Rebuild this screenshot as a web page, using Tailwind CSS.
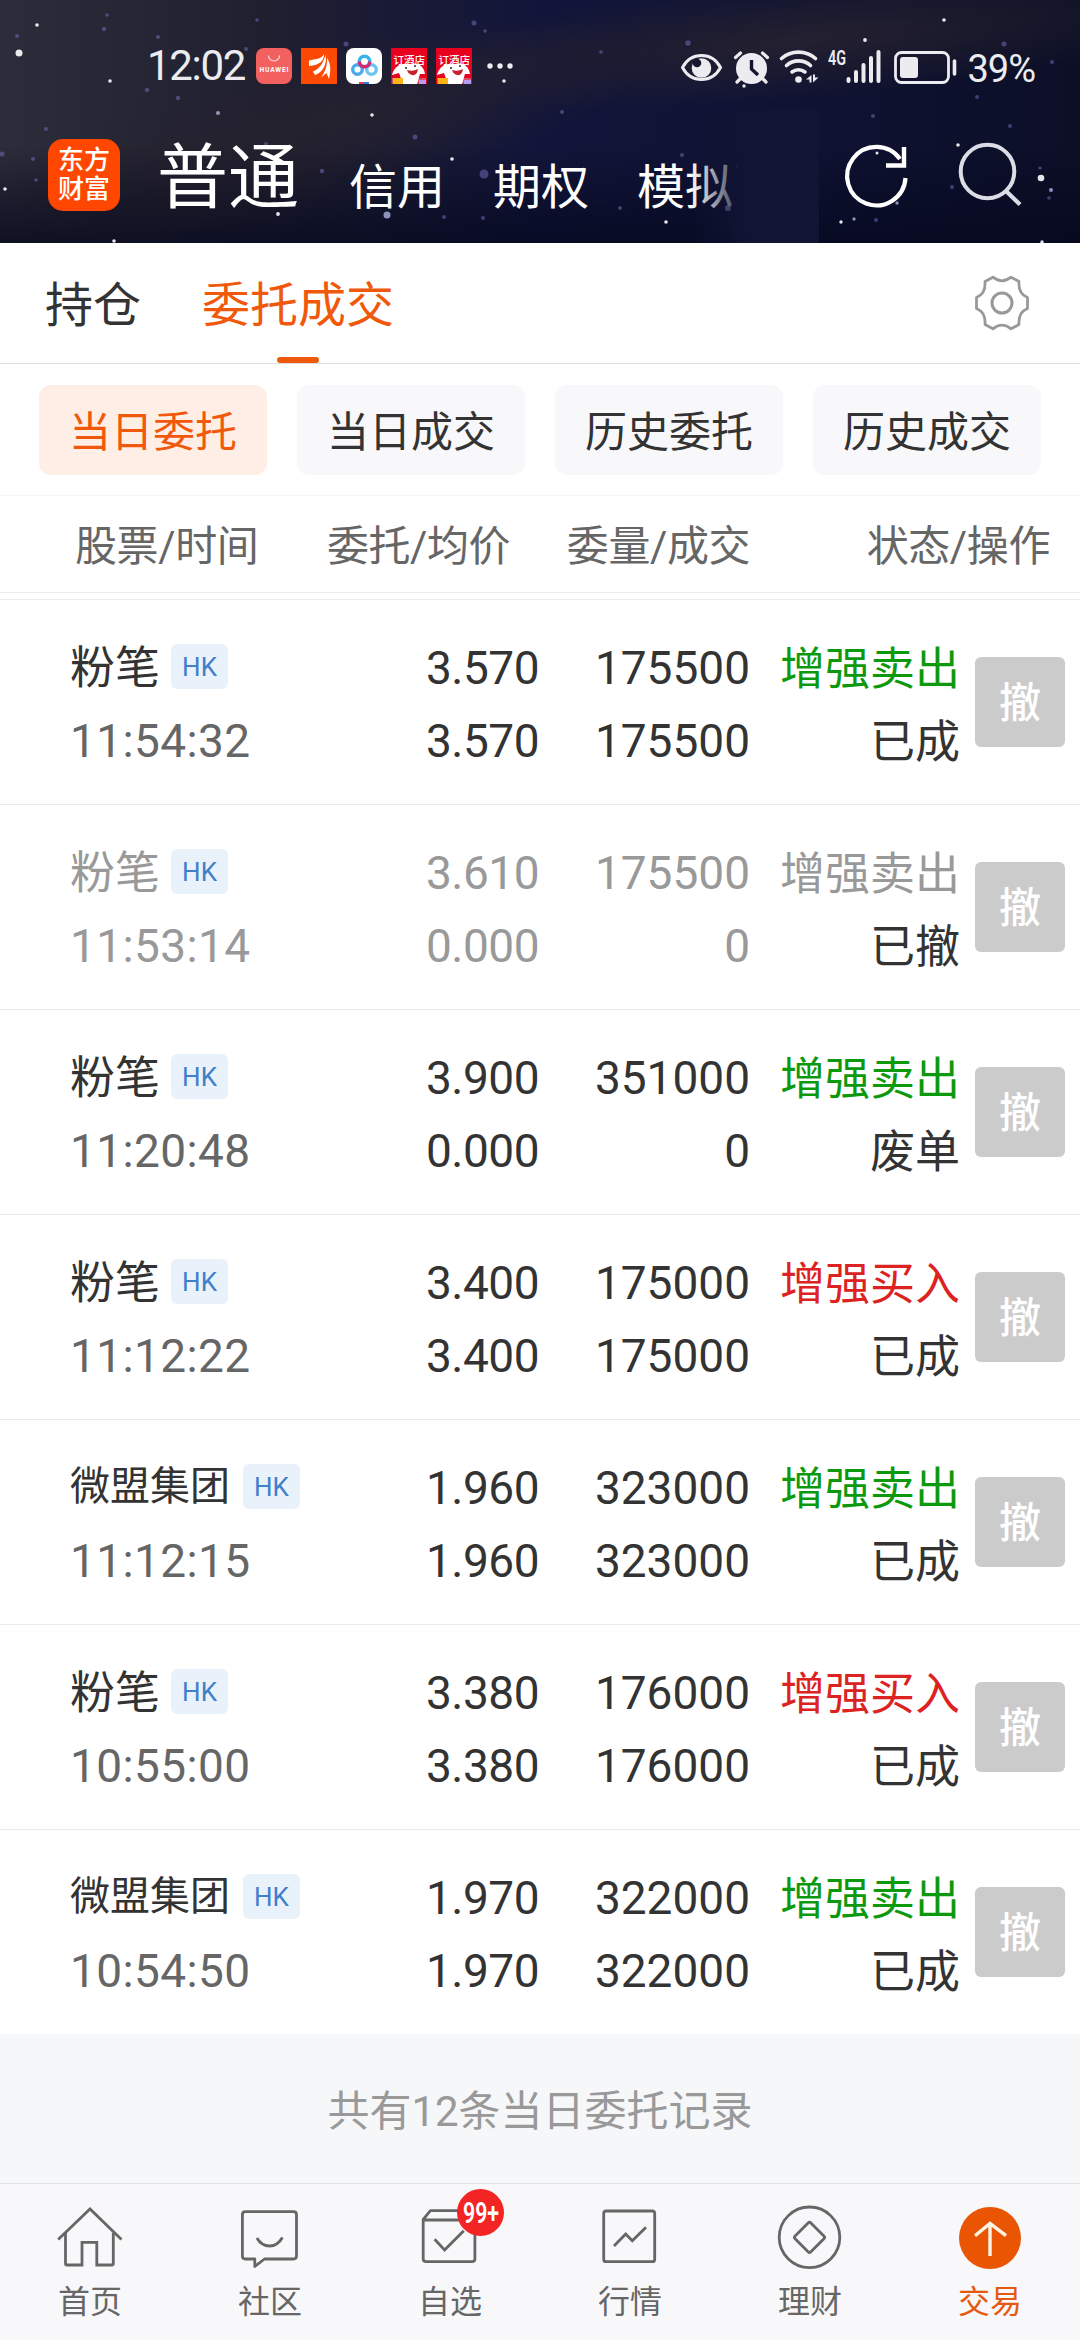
<!DOCTYPE html>
<html lang="zh-CN">

<head>
    <meta charset="UTF-8">
    <meta name="viewport" content="width=device-width, initial-scale=1.0">
    <title>委托成交</title>
    <script src="https://cdn.jsdelivr.net/npm/@tailwindcss/browser@4"></script>
</head>

<body class="w-[1080px] h-[2340px] overflow-hidden flex flex-col bg-white text-[#333] font-['Roboto','Noto_Sans_CJK_SC',sans-serif] whitespace-nowrap">

    <!-- Header -->
    <header class="relative h-[243px] shrink-0 overflow-hidden text-white bg-[#0d1030]">
        <!-- Night sky -->
        <svg class="absolute inset-0" width="1080" height="243" viewBox="0 0 1080 243">
            <defs>
                <linearGradient id="sky" x1="0" y1="0" x2="1" y2="0">
                    <stop offset="0" stop-color="#2c2d3a" />
                    <stop offset=".25" stop-color="#1f1f30" />
                    <stop offset=".5" stop-color="#12153a" />
                    <stop offset=".75" stop-color="#0f1232" />
                    <stop offset="1" stop-color="#0c0f26" />
                </linearGradient>
                <linearGradient id="dusk" x1="0" y1="0" x2="0" y2="1">
                    <stop offset=".6" stop-color="#04071c" stop-opacity="0" />
                    <stop offset="1" stop-color="#04071c" stop-opacity=".7" />
                </linearGradient>
                <radialGradient id="haze">
                    <stop offset="0" stop-color="#26222e" stop-opacity=".9" />
                    <stop offset="1" stop-color="#26222e" stop-opacity="0" />
                </radialGradient>
            </defs>
            <rect width="1080" height="243" fill="url(#sky)" />
            <ellipse cx="330" cy="120" rx="330" ry="75" fill="url(#haze)" transform="rotate(-12 330 120)" />
            <ellipse cx="160" cy="200" rx="260" ry="60" fill="url(#haze)" transform="rotate(-8 160 200)" />
            <ellipse cx="800" cy="40" rx="420" ry="60" fill="url(#haze)" transform="rotate(-5 800 40)" />
            <rect width="1080" height="243" fill="url(#dusk)" />
            <g fill="#fff" opacity=".9">
                <circle cx="19" cy="53" r="3.500" /><circle cx="37" cy="25" r="1.800" /><circle cx="110" cy="81" r="1.800" />
                <circle cx="5" cy="189" r="1.800" /><circle cx="372" cy="115" r="1.800" /><circle cx="452" cy="159" r="1.800" />
                <circle cx="278" cy="214" r="1.900" /><circle cx="114" cy="241" r="1.800" /><circle cx="504" cy="81" r="1.800" />
                <circle cx="865" cy="40" r="1.900" /><circle cx="744" cy="86" r="1.700" /><circle cx="666" cy="222" r="1.800" />
                <circle cx="841" cy="222" r="1.700" /><circle cx="958" cy="145" r="1.800" /><circle cx="1041" cy="178" r="3.300" />
                <circle cx="1042" cy="242" r="1.700" /><circle cx="877" cy="153" r="1.500" /><circle cx="944" cy="20" r="1.800" />
            </g>
            <g fill="#b7bdf0" opacity=".75">
                <circle cx="387" cy="215" r="3.500" /><circle cx="728" cy="208" r="3" /><circle cx="897" cy="203" r="1.700" />
                <circle cx="854" cy="219" r="1.700" /><circle cx="1051" cy="190" r="2" /><circle cx="218" cy="113" r="2" />
            </g>
            <g fill="#7a6fc0" opacity=".5">
                <circle cx="484" cy="174" r="4.500" /><circle cx="346" cy="44" r="2.500" /><circle cx="246" cy="49" r="2" />
                <circle cx="158" cy="37" r="2" /><circle cx="147" cy="90" r="2.200" /><circle cx="178" cy="98" r="2.200" />
                <circle cx="266" cy="144" r="2" /><circle cx="322" cy="171" r="2.200" /><circle cx="415" cy="137" r="2.500" />
                <circle cx="46" cy="129" r="2" /><circle cx="33" cy="159" r="2" /><circle cx="36" cy="180" r="1.800" />
                <circle cx="444" cy="217" r="2" /><circle cx="483" cy="218" r="2" /><circle cx="562" cy="112" r="2" />
                <circle cx="682" cy="155" r="2" /><circle cx="620" cy="208" r="2" /><circle cx="688" cy="43" r="2.800" />
                <circle cx="1004" cy="44" r="2.500" /><circle cx="1052" cy="62" r="2" /><circle cx="977" cy="97" r="2" />
                <circle cx="1010" cy="126" r="2" /><circle cx="873" cy="116" r="2" /><circle cx="952" cy="187" r="2" />
                <circle cx="474" cy="23" r="2.500" /><circle cx="2" cy="154" r="2.500" /><circle cx="876" cy="220" r="2" />
                <circle cx="1049" cy="198" r="1.800" /><circle cx="1040" cy="168" r="1.800" /><circle cx="737" cy="166" r="1.600" />
                <circle cx="104" cy="29" r="2.200" /><circle cx="107" cy="15" r="1.800" /><circle cx="17" cy="36" r="2" />
                <circle cx="485" cy="31" r="1.800" /><circle cx="257" cy="20" r="1.800" /><circle cx="601" cy="52" r="1.800" />
            </g>
        </svg>

        <!-- Status bar -->
        <div class="relative h-[110px] pt-[24px] flex justify-between pl-[147px] pr-[45px]">
            <div class="h-[88px] -mt-0.5 flex items-center text-[#ececf0]">
                <span class="w-[109px] text-[42px] leading-none tracking-[-1.300px]">12:02</span>
                <div class="flex gap-[9px]">
                    <svg width="36" height="36" viewBox="0 0 36 36">
                        <rect width="36" height="36" rx="8" fill="#f2615f" />
                        <path d="M12.500 7.500a5.500 5.500 0 0 0 11 0" fill="none" stroke="#fff" stroke-width="1.200" opacity=".8" />
                        <text x="3.500" y="24" font-size="6.600" font-weight="700" fill="#fff" textLength="29">HUAWEI</text>
                    </svg>
                    <svg width="36" height="36" viewBox="0 0 36 36">
                        <rect width="36" height="36" fill="#fc4a05" />
                        <path d="M8 12.500C14 10.500 20 12 23 6C23 13 19 17 8 18zM12 23.500C18 21 22 16 24.500 7C26.500 16 22 24 14 27zM20 29.500C24 24 26.500 18 26 10C31 17 29 26 28 31L25.500 25z" fill="#fff" />
                    </svg>
                    <svg width="36" height="36" viewBox="0 0 36 36">
                        <rect width="36" height="36" rx="8" fill="#fff" />
                        <g fill="none" stroke-width="3.400">
                            <circle cx="11.500" cy="21.500" r="4.800" stroke="#4aa8ee" />
                            <circle cx="25.500" cy="21.500" r="4.800" stroke="#6cc4f2" />
                            <circle cx="18.500" cy="13.500" r="5.200" stroke="#35b5e8" />
                            <path d="M13.300 13.500a5.200 5.200 0 0 0 10.400 0" stroke="#d9286f" />
                        </g>
                        <path d="M13 34h5v2h-5z" fill="#e5394c" />
                        <path d="M18 34h5v2h-5z" fill="#2f7be0" />
                    </svg>
                    <svg width="36" height="36" viewBox="0 0 36 36">
                        <rect width="36" height="36" fill="#e9001f" />
                        <path d="M1 30h34v5.500H1z" fill="#d9506c" />
                        <path d="M1 27C4 17 10 15 19 16C28 14 33 19 34 26L29 26L26 36H12L8 25z" fill="#fff" />
                        <path d="M16 22Q22 24 27 21Q26 28 21 27Q17 26 16 22z" fill="#c9202c" />
                        <circle cx="15" cy="20" r="1" fill="#222" /><circle cx="24" cy="18" r="1" fill="#222" />
                        <path d="M2 30h10v6H2z" fill="#fcb514" /><path d="M28 32h7v4h-7z" fill="#b99af0" />
                        <text x="2.500" y="15.500" font-size="10.500" font-weight="500" fill="#fff">订酒店</text>
                    </svg>
                    <svg width="36" height="36" viewBox="0 0 36 36">
                        <rect width="36" height="36" fill="#e9001f" />
                        <path d="M1 30h34v5.500H1z" fill="#d9506c" />
                        <path d="M1 27C4 17 10 15 19 16C28 14 33 19 34 26L29 26L26 36H12L8 25z" fill="#fff" />
                        <path d="M16 22Q22 24 27 21Q26 28 21 27Q17 26 16 22z" fill="#c9202c" />
                        <circle cx="15" cy="20" r="1" fill="#222" /><circle cx="24" cy="18" r="1" fill="#222" />
                        <path d="M2 30h10v6H2z" fill="#fcb514" /><path d="M28 32h7v4h-7z" fill="#b99af0" />
                        <text x="2.500" y="15.500" font-size="10.500" font-weight="500" fill="#fff">订酒店</text>
                    </svg>
                </div>
                <svg class="ml-[15px]" width="28" height="6" viewBox="0 0 28 6" fill="#ececf0">
                    <circle cx="3" cy="3" r="2.700" /><circle cx="13" cy="3" r="2.700" /><circle cx="23" cy="3" r="2.700" />
                </svg>
            </div>

            <div class="h-[86px] flex items-center text-[#ececf0]">
                <!-- eye, alarm, wifi, signal, battery -->
                <svg width="287" height="40" viewBox="676 46 287 40" fill="none" stroke="#ececf0">
                    <path d="M681.500 66.500C690 50.500 711 50.500 719.500 66.500C711 82.500 690 82.500 681.500 66.500z" stroke-width="3" />
                    <circle cx="700.500" cy="67" r="9.800" fill="#ececf0" stroke="none" />
                    <circle cx="696" cy="62" r="4.300" fill="#14162f" stroke="none" />
                    <circle cx="750.500" cy="67.500" r="15.500" fill="#ececf0" stroke="none" />
                    <path d="M734.500 56.500l5-4.500M766.500 56.500l-5-4.500M739 78l-3 3M762 78l3 3" stroke-width="3.200" stroke-linecap="round" />
                    <path d="M750.500 59v9l6.500 6" stroke="#14162f" stroke-width="3.400" />
                    <path d="M780.500 57.500a26 26 0 0 1 34 0M785.500 64.500a18 18 0 0 1 24 0M791 71a10.500 10.500 0 0 1 13 0" stroke-width="3.600" stroke-linecap="round" />
                    <circle cx="797.500" cy="78.500" r="3.300" fill="#ececf0" stroke="none" />
                    <path d="M810.500 74v7.500h-2v-3h-3.500zM812 81.500v-8h2v3h3.500z" fill="#ececf0" stroke="none" />
                    <text x="827" y="64" font-size="19.500" font-weight="600" fill="#ececf0" stroke="none" textLength="18" lengthAdjust="spacingAndGlyphs">4G</text>
                    <path d="M847.500 78v2M855 71v9M862.500 64v16M870 57v23M877.500 51v29" stroke-width="4" stroke-linecap="round" />
                    <rect x="894.500" y="51.500" width="53" height="30" rx="6" stroke-width="2.800" />
                    <rect x="899" y="56" width="18" height="21" rx="3" fill="#ececf0" stroke="none" />
                    <path d="M953.500 60v13" stroke-width="3.600" stroke-linecap="round" />
                </svg>
                <span class="ml-[3px] text-[38px] leading-none tracking-[-1px] pt-[3px]">39%</span>
            </div>
        </div>

        <!-- Account types -->
        <div class="relative h-[133px] flex items-start pl-12">
            <div class="mt-[29px] w-[72px] h-[72px] rounded-[15px] bg-[#ff4702] flex flex-col items-center justify-center text-[26px] leading-[29px] font-medium">
                <span>东方</span>
                <span>财富</span>
            </div>
            <nav class="ml-[37px] flex">
                <a class="w-[192px] mt-[29px] text-[71px] leading-[78px]">普通</a>
                <a class="w-[144px] mt-[48px] text-[48px] leading-[60px]">信用</a>
                <a class="w-[144px] mt-[48px] text-[48px] leading-[60px]">期权</a>
                <a class="w-[182px] mt-[48px] text-[48px] leading-[60px]">模拟</a>
            </nav>
            <div class="absolute left-[690px] top-0 w-[129px] h-[133px] bg-linear-to-r from-[#111433]/0 to-[#111433] to-[46%]"></div>
            <svg class="absolute left-[841px] top-[29px]" width="190" height="72" viewBox="840 139 190 72" fill="none">
                <path d="M904.500 178A29.200 29.200 0 1 1 899 159" stroke="#fff" stroke-width="4.200" />
                <path d="M903 147v18.500h-18" stroke="#fff" stroke-width="4.400" />
                <circle cx="986.500" cy="171.500" r="26.800" stroke="#dcdce6" stroke-width="4" />
                <path d="M1005 191l14 13.500" stroke="#dcdce6" stroke-width="4.200" />
            </svg>
        </div>
    </header>

    <!-- Tabs -->
    <div class="h-[121px] shrink-0 flex items-start pl-[45px] pr-[51px] border-b border-[#dedede] text-[48px] leading-[60px]">
        <a class="mt-[33px]">持仓</a>
        <div class="ml-[61px] flex flex-col items-center text-[#f0590c]">
            <span class="mt-[33px]">委托成交</span>
            <span class="mt-[21px] w-[42px] h-[6px] rounded-full bg-[#f0590c]"></span>
        </div>
        <svg class="ml-auto mt-8" width="54" height="56" viewBox="-27 -28 54 56" fill="none" stroke="#999" stroke-width="2.800" stroke-linejoin="round">
            <path d="M-9 -25.800Q0 -18.500 9 -25.800L17 -21.500Q16 -9.500 25.500 -5.500V5.500Q16 9.500 17 21.500L9 25.800Q0 18.500 -9 25.800L-17 21.500Q-16 9.500 -25.500 5.500V-5.500Q-16 -9.500 -17 -21.500z" />
            <circle r="10" stroke-width="3" />
        </svg>
    </div>

    <!-- Filters -->
    <div class="h-[132px] shrink-0 flex gap-[30px] px-[39px] pt-[21px] border-b border-[#f5f5f5] text-[42px] leading-[95px] text-center">
        <button class="w-[228px] h-[90px] rounded-xl bg-[#ffeee6] text-[#f0590c]">当日委托</button>
        <button class="w-[228px] h-[90px] rounded-xl bg-[#f8f8fa]">当日成交</button>
        <button class="w-[228px] h-[90px] rounded-xl bg-[#f8f8fa]">历史委托</button>
        <button class="w-[228px] h-[90px] rounded-xl bg-[#f8f8fa]">历史成交</button>
    </div>

    <!-- Column titles -->
    <div class="h-[97px] shrink-0 flex justify-between pl-[75px] pr-[30px] border-b border-[#ebebeb] text-[42px] leading-[102px] tracking-[-0.400px] text-[#666]">
        <span class="w-[252px]">股票/时间</span>
        <span class="w-[240px]">委托/均价</span>
        <span class="w-[300px]">委量/成交</span>
        <span>状态/操作</span>
    </div>
    <div class="h-[7px] shrink-0 border-b border-[#ebebeb]"></div>

    <!-- Orders -->
    <div id="orders" class="shrink-0"></div>

    <div class="h-[148px] shrink-0 bg-[#f6f7f9] text-center text-[42px] leading-[154px] text-[#999]">共有12条当日委托记录</div>

    <!-- Bottom nav -->
    <nav class="h-[158px] shrink-0 grid grid-cols-6 border-t border-[#e2e2e4] bg-[#f8f8fa] text-[32px] leading-[40px] text-[#666]">
        <a class="flex flex-col items-center pt-4">
            <svg width="80" height="72" viewBox="0 0 80 72" fill="none" stroke="#666" stroke-width="2.800">
                <path d="M8.200 39.500L40 9L71.500 39.500" />
                <path d="M15.500 33V63.500q0 1.500 1.500 1.500H32V42.300H46.800V65H61.800q1.500 0 1.500 -1.500V33" />
            </svg>
            <span class="mt-[10px]">首页</span>
        </a>
        <a class="flex flex-col items-center pt-4">
            <svg width="80" height="72" viewBox="0 0 80 72" fill="none" stroke="#666" stroke-width="2.800" stroke-linejoin="round">
                <path d="M15.400 11.700H63.500q3 0 3 3V56q0 3-3 3H34.500L24.800 66.500V59H15.400q-3 0-3-3V14.700q0-3 3-3z" />
                <path d="M26.900 38Q31.500 46 39.600 46T52.400 37.500" />
            </svg>
            <span class="mt-[10px]">社区</span>
        </a>
        <a class="relative flex flex-col items-center pt-4">
            <svg width="80" height="72" viewBox="0 0 80 72" fill="none" stroke="#666" stroke-width="2.800" stroke-linejoin="round">
                <path d="M13.200 20H64.900V58.700q0 3-3 3H16.200q-3 0-3-3V19.500L20.400 10.700H60" />
                <path d="M24.600 39.300L34.600 50L53.800 30.700" stroke-linejoin="miter" />
            </svg>
            <svg class="absolute left-[97px] top-[5px]" width="47" height="47" viewBox="0 0 47 47">
                <circle cx="23.500" cy="23.500" r="23.500" fill="#f32424" />
                <text x="6" y="34" font-size="29" font-weight="600" fill="#fff" textLength="36" lengthAdjust="spacingAndGlyphs">99+</text>
            </svg>
            <span class="mt-[10px]">自选</span>
        </a>
        <a class="flex flex-col items-center pt-4">
            <svg width="80" height="72" viewBox="0 0 80 72" fill="none" stroke="#666" stroke-width="2.800">
                <rect x="13.700" y="11" width="51" height="50.700" rx="2.500" />
                <path d="M24 46L35.700 34L42.300 40.700L56 27.300" />
            </svg>
            <span class="mt-[10px]">行情</span>
        </a>
        <a class="flex flex-col items-center pt-4">
            <svg width="80" height="72" viewBox="0 0 80 72" fill="none" stroke="#666" stroke-width="2.800" stroke-linejoin="round">
                <circle cx="39.500" cy="37.300" r="30.300" />
                <rect x="28.300" y="26.200" width="22.400" height="22.400" rx="2" transform="rotate(45 39.500 37.400)" />
            </svg>
            <span class="mt-[10px]">理财</span>
        </a>
        <a class="flex flex-col items-center pt-4 text-[#e55a10]">
            <svg width="80" height="72" viewBox="0 0 80 72" fill="none" stroke="#fff3e6" stroke-width="3.400">
                <circle cx="40" cy="38" r="31" fill="#ea5504" stroke="none" />
                <path d="M40 56V23M25 35.700L40 23.500L56 35.700" />
            </svg>
            <span class="mt-[10px]">交易</span>
        </a>
    </nav>

    <script>
        const orders = [
            { name: "粉笔", time: "11:54:32", price: "3.570", avg: "3.570", amount: "175500", filled: "175500", side: "增强卖出", status: "已成" },
            { name: "粉笔", time: "11:53:14", price: "3.610", avg: "0.000", amount: "175500", filled: "0", side: "增强卖出", status: "已撤", cancelled: true },
            { name: "粉笔", time: "11:20:48", price: "3.900", avg: "0.000", amount: "351000", filled: "0", side: "增强卖出", status: "废单" },
            { name: "粉笔", time: "11:12:22", price: "3.400", avg: "3.400", amount: "175000", filled: "175000", side: "增强买入", status: "已成" },
            { name: "微盟集团", time: "11:12:15", price: "1.960", avg: "1.960", amount: "323000", filled: "323000", side: "增强卖出", status: "已成" },
            { name: "粉笔", time: "10:55:00", price: "3.380", avg: "3.380", amount: "176000", filled: "176000", side: "增强买入", status: "已成" },
            { name: "微盟集团", time: "10:54:50", price: "1.970", avg: "1.970", amount: "322000", filled: "322000", side: "增强卖出", status: "已成" },
        ];

        document.getElementById("orders").innerHTML = orders.map((o) => {
            const main = o.cancelled ? "text-[#999]" : "text-[#333]";
            const time = o.cancelled ? "text-[#999]" : "text-[#666]";
            const side = o.cancelled ? "text-[#999]" : o.side === "增强买入" ? "text-[#dd2222]" : "text-[#0d990d]";
            // long names are set smaller
            const name = o.name.length > 2 ? "text-[40px] -mt-1 mr-[2px]" : "text-[45px]";
            return `
                <div class="h-[205px] flex items-start pl-[69px] pr-[15px] border-b border-[#ebebeb] last:border-[#f6f7f9] text-[46px] leading-[73px] ${main}">
                    <div class="w-[270px] pt-[32px]">
                        <div class="flex items-center h-[73px] pl-px">
                            <span class="${name}">${o.name}</span>
                            <span class="ml-[11px] -mt-1 w-[57px] h-[45px] rounded-md bg-[#e9f2fb] text-[#3f7fcb] text-[26px] leading-[47px] text-center">HK</span>
                        </div>
                        <div class="tracking-[0.400px] pl-px ${time}">${o.time}</div>
                    </div>
                    <div class="w-[200px] pt-[32px] text-right tracking-[-0.500px]">
                        <div>${o.price}</div>
                        <div>${o.avg}</div>
                    </div>
                    <div class="w-[211px] pt-[32px] text-right">
                        <div>${o.amount}</div>
                        <div>${o.filled}</div>
                    </div>
                    <div class="w-[210px] pt-[33px] text-right text-[45px]">
                        <div class="${side}">${o.side}</div>
                        <div class="text-[#333]">${o.status}</div>
                    </div>
                    <button class="ml-auto mt-[57px] w-[90px] h-[90px] rounded-md bg-[#cbcbcb] text-white text-[42px] leading-[94px] font-medium">撤</button>
                </div>
            `;
        }).join("");
    </script>
</body>

</html>
